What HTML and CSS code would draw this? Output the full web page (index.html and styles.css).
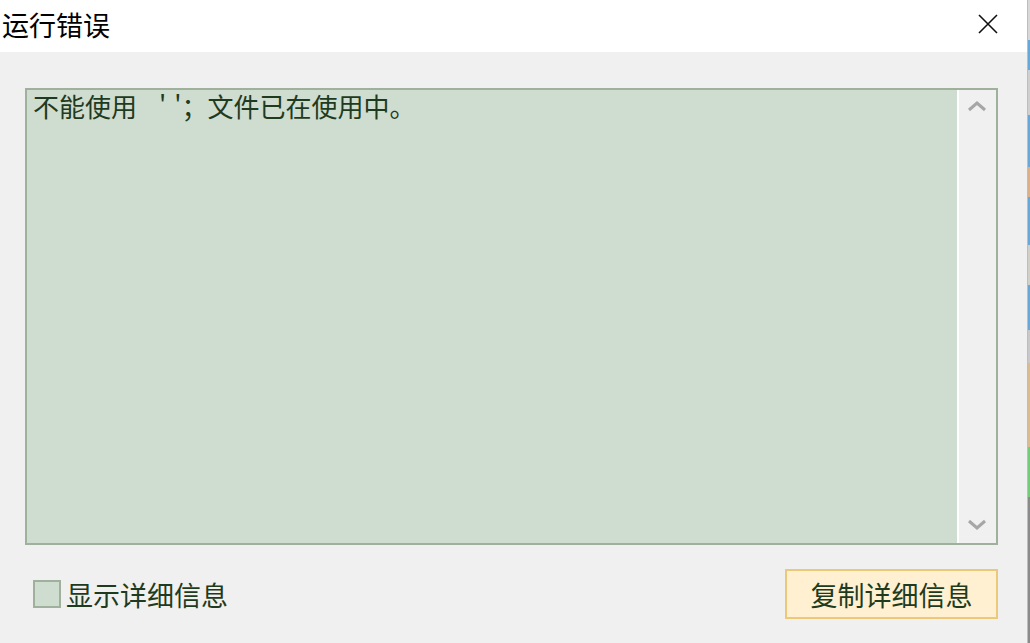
FILE: index.html
```html
<!DOCTYPE html>
<html lang="zh-CN">
<head>
<meta charset="utf-8">
<title>运行错误</title>
<link rel="stylesheet" href="styles.css">
</head>
<body>
<div class="screen">
  <div class="dialog">
    <div class="titlebar">
      <span class="title">运行错误</span>
      <svg class="close" width="20" height="20" viewBox="0 0 20 20"><path d="M1 1 L19 19 M19 1 L1 19" stroke="#111" stroke-width="1.6" fill="none"/></svg>
    </div>
    <div class="content">
      <div class="msgbox">
        <div class="msgtext">不能使用<span class="q1">'</span><span class="q2">'</span>；文件已在使用中。</div>
        <div class="scrollbar">
          <svg class="arrow" width="20" height="12" viewBox="0 0 20 12"><path d="M2 10 L10 3 L18 10" stroke="#a6a6a6" stroke-width="3" fill="none"/></svg>
          <svg class="arrow" width="20" height="12" viewBox="0 0 20 12"><path d="M2 2 L10 9 L18 2" stroke="#a6a6a6" stroke-width="3" fill="none"/></svg>
        </div>
      </div>
      <div class="footer">
        <label class="check"><span class="box"></span><span class="checklabel">显示详细信息</span></label>
        <div class="btn">复制详细信息</div>
      </div>
    </div>
  </div>
  <div class="strip">
    <div class="s s1"></div>
    <div class="s s2"></div>
    <div class="s s3"></div>
    <div class="s s4"></div>
    <div class="s s5"></div>
    <div class="s s6"></div>
    <div class="s s7"></div>
    <div class="s s8"></div>
    <div class="s s9"></div>
    <div class="s s10"></div>
    <div class="s s11"></div>
    <div class="s s12"></div>
  </div>
</div>
</body>
</html>
```
FILE: styles.css
```css
* { box-sizing: border-box; }
html, body { margin: 0; padding: 0; }
body {
  font-family: "Noto Sans CJK SC", "Noto Sans", sans-serif;
  background: #f0f0f0;
  width: 1030px;
  height: 643px;
  overflow: hidden;
}
.screen { display: flex; width: 1030px; height: 643px; }
.dialog { width: 1027px; height: 643px; background: #f0f0f0; display: flex; flex-direction: column; }
.titlebar {
  height: 52px;
  background: #ffffff;
  display: flex;
  align-items: center;
  justify-content: space-between;
  padding: 0 29px 0 2px;
}
.title { font-size: 27px; color: #000; line-height: 1; margin-top: -3px; }
.close { display: block; margin-top: -4px; }
.content { padding: 36px 0 0 25px; width: 998px; }
.msgbox {
  height: 457px;
  border: 2px solid #9fb09d;
  background: #cfdcd0;
  display: flex;
}
.msgtext {
  flex: 1;
  padding: 0 0 0 6px;
  font-size: 26px;
  line-height: 32px;
  color: #1e3b20;
  white-space: pre;
}
.q1 { padding-left: 22px; padding-right: 8px; }
.q2 { padding-right: 0; }
.scrollbar {
  width: 39px;
  background: #f0f0f0;
  border-left: 2px solid #ffffff;
  display: flex;
  flex-direction: column;
  justify-content: space-between;
  align-items: center;
  padding: 10px 0 12px;
}
.arrow { display: block; margin-left: -2px; }
.footer {
  margin-top: 24px;
  display: flex;
  align-items: center;
  justify-content: space-between;
}
.check { display: flex; align-items: center; padding-left: 8px; gap: 5px; }
.box {
  width: 28px;
  height: 28px;
  border: 2px solid #9fb09d;
  background: #cfdcd0;
}
.checklabel { font-size: 27px; color: #1e3b20; line-height: 1; }
.btn {
  width: 213px;
  height: 50px;
  background: #fff0d2;
  border: 2px solid #ecc878;
  display: flex;
  align-items: center;
  justify-content: center;
  font-size: 27px;
  color: #1e3b20;
  line-height: 1;
}
.strip { width: 3px; height: 643px; display: flex; flex-direction: column; border-left: 1px solid #bdbdbd; }
.s { width: 100%; }
.s1 { height: 40px; background: #d8d8d8; }
.s2 { height: 30px; background: #68a8d8; }
.s3 { height: 45px; background: #cfcfcf; }
.s4 { height: 52px; background: #6aa6d6; }
.s5 { height: 30px; background: #d9b088; }
.s6 { height: 48px; background: #6aa6d6; }
.s7 { height: 40px; background: #d0d0c8; }
.s8 { height: 45px; background: #6aa6d6; }
.s9 { height: 33px; background: #c8c8c8; }
.s10 { height: 84px; background: #d8bc90; }
.s11 { height: 50px; background: #72cc78; }
.s12 { height: 146px; background: #8a8a8a; }
```
